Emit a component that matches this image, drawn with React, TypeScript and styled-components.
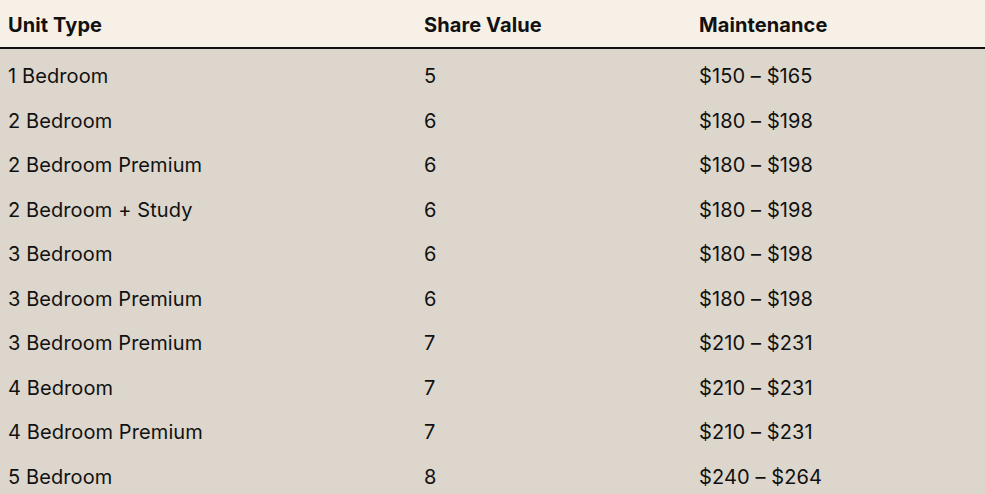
import React from "react";
import styled, { createGlobalStyle } from "styled-components";

const Global = createGlobalStyle`
  html, body { margin: 0; padding: 0; background: #ddd6cc; }
  body { font-family: "Inter", "Liberation Sans", sans-serif; color: #111; }
`;

const Table = styled.table`
  width: 985px;
  border-collapse: collapse;
  table-layout: fixed;
`;

const HeadRow = styled.tr`
  background: #f6f0e6;
  border-bottom: 2px solid #111;
`;

const Th = styled.th<{ $w?: number }>`
  width: ${(p) => (p.$w ? `${p.$w}px` : "auto")};
  height: 45px;
  padding: 2px 0 0 8px;
  text-align: left;
  font-size: 20px;
  font-weight: 700;
  letter-spacing: 0.1px;
  vertical-align: middle;
`;

const Td = styled.td`
  height: 44.5px;
  padding: 0 0 0 8px;
  font-size: 20px;
  font-weight: 400;
  letter-spacing: 0.1px;
  vertical-align: middle;
`;

const Body = styled.tbody`
  background: #ddd6cc;
  tr:first-child td { padding-top: 5px; }
`;

const rows: [string, string, string][] = [
  ["1 Bedroom", "5", "$150 – $165"],
  ["2 Bedroom", "6", "$180 – $198"],
  ["2 Bedroom Premium", "6", "$180 – $198"],
  ["2 Bedroom + Study", "6", "$180 – $198"],
  ["3 Bedroom", "6", "$180 – $198"],
  ["3 Bedroom Premium", "6", "$180 – $198"],
  ["3 Bedroom Premium", "7", "$210 – $231"],
  ["4 Bedroom", "7", "$210 – $231"],
  ["4 Bedroom Premium", "7", "$210 – $231"],
  ["5 Bedroom", "8", "$240 – $264"],
];

export default function App() {
  return (
    <>
      <Global />
      <Table>
        <thead>
          <HeadRow>
            <Th $w={408}>Unit Type</Th>
            <Th $w={267}>Share Value</Th>
            <Th>Maintenance</Th>
          </HeadRow>
        </thead>
        <Body>
          {rows.map((r, i) => (
            <tr key={i}>
              <Td>{r[0]}</Td>
              <Td>{r[1]}</Td>
              <Td>{r[2]}</Td>
            </tr>
          ))}
        </Body>
      </Table>
    </>
  );
}
